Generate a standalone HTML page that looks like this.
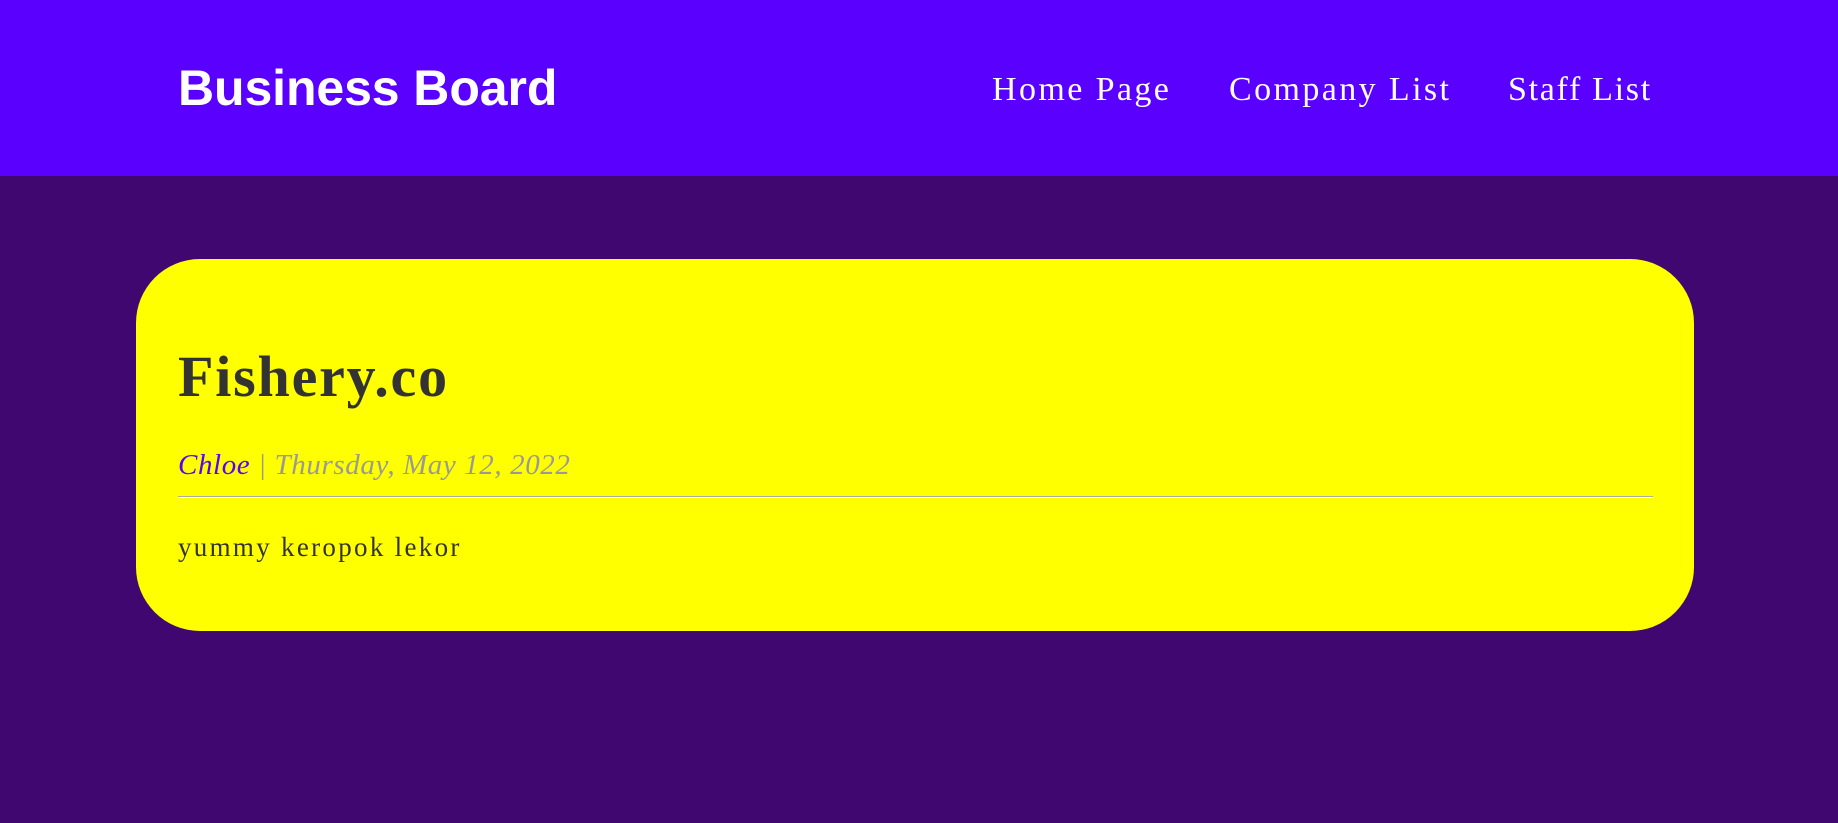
<!DOCTYPE html>
<html><head><meta charset="utf-8"><style>
html,body{margin:0;padding:0;}
body{width:1838px;height:823px;background:#410770;overflow:hidden;position:relative;font-family:"Liberation Serif",serif;}
.hdr{position:absolute;left:0;top:0;width:1838px;height:176px;background:#5a00ff;}
.logo{position:absolute;left:178px;top:56px;font-family:"Liberation Sans",sans-serif;font-weight:bold;font-size:50px;color:#fff;letter-spacing:-0.1px;line-height:64px;}
.nav{position:absolute;top:68px;font-size:34px;color:#fff;line-height:44px;letter-spacing:2.4px;}
.card{position:absolute;left:136px;top:259px;width:1558px;height:372px;background:#ffff00;border-radius:64px;}
h1{position:absolute;left:178px;top:342px;margin:0;font-size:58px;line-height:70px;color:#333;font-weight:bold;letter-spacing:1.8px;}
.meta{position:absolute;left:178px;top:447px;font-size:29px;font-style:italic;color:#999;line-height:36px;letter-spacing:0.6px;}
.meta .a{color:#5a00ff;}
.hr{position:absolute;left:178px;top:496px;width:1475px;height:1px;background:#aaa;border-bottom:1px solid #fff;}
.body{position:absolute;left:178px;top:530px;font-size:27px;color:#333;line-height:34px;letter-spacing:2.3px;}
</style></head><body>
<div class="hdr">
<div class="logo">Business Board</div>
<div class="nav" style="left:992px">Home Page</div>
<div class="nav" style="left:1229px">Company List</div>
<div class="nav" style="left:1508px;letter-spacing:1.7px">Staff List</div>
</div>
<div class="card"></div>
<h1>Fishery.co</h1>
<div class="meta"><span class="a">Chloe</span> | Thursday, May 12, 2022</div>
<div class="hr"></div>
<div class="body">yummy keropok lekor</div>
</body></html>
